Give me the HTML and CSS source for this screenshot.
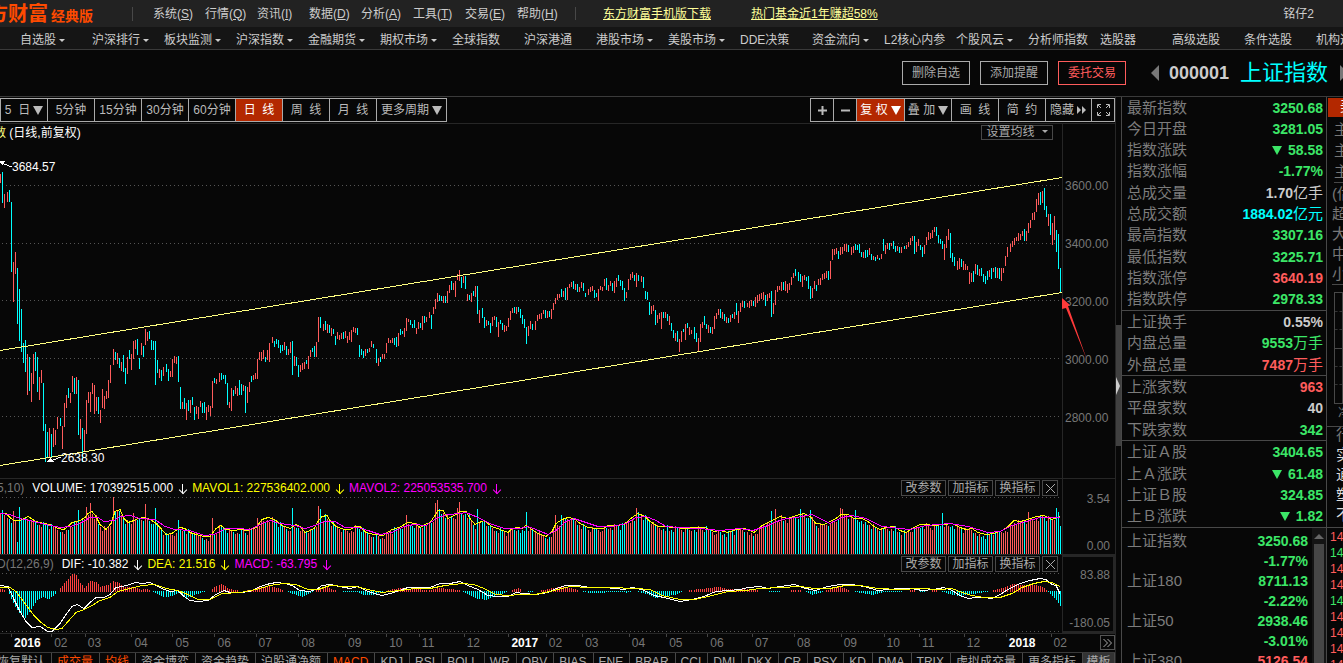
FILE: index.html
```html
<!DOCTYPE html>
<html lang="zh-CN">
<head>
<meta charset="utf-8">
<title>上证指数 000001</title>
<link rel="stylesheet" href="styles.css">
</head>
<body>
<header class="titlebar">
  <div class="logo"><span class="logo-main">方财富</span><span class="logo-sub">经典版</span></div>
  <nav class="menu">
    <button>系统(<u>S</u>)</button><button>行情(<u>Q</u>)</button><button>资讯(<u>I</u>)</button><button>数据(<u>D</u>)</button><button>分析(<u>A</u>)</button><button>工具(<u>T</u>)</button><button>交易(<u>E</u>)</button><button>帮助(<u>H</u>)</button>
  </nav>
  <a class="promo" href="#">东方财富手机版下载</a>
  <a class="promo" href="#">热门基金近1年赚超58%</a>
  <span class="user">铭仔2</span>
</header>
<nav class="channels">
  <button class="more">自选股</button><button class="more">沪深排行</button><button class="more">板块监测</button><button class="more">沪深指数</button><button class="more">金融期货</button><button class="more">期权市场</button><button>全球指数</button><button>沪深港通</button><button class="more">港股市场</button><button class="more">美股市场</button><button>DDE决策</button><button class="more">资金流向</button><button>L2核心内参</button><button class="more">个股风云</button><button>分析师指数</button><button>选股器</button><button>高级选股</button><button>条件选股</button><button>机构选股</button>
</nav>
<div class="security">
  <button class="act">删除自选</button>
  <button class="act">添加提醒</button>
  <button class="act trade">委托交易</button>
  <button class="step prev" aria-label="上一只"></button>
  <span class="code">000001</span>
  <h1 class="name">上证指数</h1>
  <button class="step next" aria-label="下一只"></button>
</div>
<main class="main">
  <section class="charts">
    <div class="toolbar">
      <div class="group periods">
        <button>5&nbsp; 日<i class="tri"></i></button><button>5分钟</button><button>15分钟</button><button>30分钟</button><button>60分钟</button><button class="on">日&nbsp; 线</button><button>周&nbsp; 线</button><button>月&nbsp; 线</button><button class="wide">更多周期<i class="tri"></i></button>
      </div>
      <div class="group tools">
        <button class="small" aria-label="放大"><svg width="9" height="9"><path d="M0 4.5H9M4.5 0V9" stroke="#bbb" stroke-width="2"/></svg></button><button class="small" aria-label="缩小"><svg width="9" height="9"><path d="M0 4.5H9" stroke="#bbb" stroke-width="2"/></svg></button><button class="on first">复 权<i class="tri"></i></button><button>叠 加<i class="tri"></i></button><button>画&nbsp; 线</button><button>简&nbsp; 约</button><button class="hide">隐藏<svg width="10" height="8"><path d="M0 0L4 4L0 8ZM5 0L9 4L5 8Z" fill="#bbb"/></svg></button><button class="small" aria-label="全屏"><svg width="13" height="12" fill="none" stroke="#bbb"><path d="M.5 4V.5H4M1 1L4 4M9 .5H12.5V4M12 1L9 4M.5 8V11.5H4M1 11L4 8M9 11.5H12.5V8M12 11L9 8"/></svg></button>
      </div>
    </div>
    <div class="pane price">
      <div class="plot">
        <div class="head"><span class="series"><b class="nm">数</b> (日线,前复权)</span><button class="ma">设置均线<i class="tri tiny"></i></button></div>
        <svg id="k" class="canvas k" viewBox="0 150 1062 328" preserveAspectRatio="none"></svg>
      </div>
      <div class="axis prices"><span>3600.00</span><span>3400.00</span><span>3200.00</span><span>3000.00</span><span>2800.00</span></div>
      <svg class="arrow" width="28" height="66" viewBox="0 0 28 66" fill="#ff3a3a"><path d="M0 1L8 8L6 9L25 63L4 11L0 12Z"/></svg>
    </div>
    <div class="pane">
      <div class="plot">
        <div class="head sub"><span class="dim">5,10)</span><span class="w">VOLUME: 170392515.000</span><span class="w dn"></span><span class="y">MAVOL1: 227536402.000</span><span class="y dn"></span><span class="m">MAVOL2: 225053535.700</span><span class="m dn"></span>
          <div class="ops"><button>改参数</button><button>加指标</button><button>换指标</button><button class="x" aria-label="关闭"><svg width="9" height="9"><path d="M0 0L9 9M9 0L0 9" stroke="#aaa"/></svg></button></div></div>
        <svg id="v" class="canvas v" viewBox="0 22 1062 57" preserveAspectRatio="none"></svg>
      </div>
      <div class="axis ends"><span>3.54</span><span>0.00</span></div>
    </div>
    <div class="pane macd">
      <div class="plot">
        <div class="head sub"><span class="dim">D(12,26,9)</span><span class="w">DIF: -10.382</span><span class="w dn"></span><span class="y">DEA: 21.516</span><span class="y dn"></span><span class="m">MACD: -63.795</span><span class="m dn"></span>
          <div class="ops"><button>改参数</button><button>加指标</button><button>换指标</button><button class="x" aria-label="关闭"><svg width="9" height="9"><path d="M0 0L9 9M9 0L0 9" stroke="#aaa"/></svg></button></div></div>
        <svg id="m" class="canvas d" viewBox="0 98 1062 60" preserveAspectRatio="none"></svg>
      </div>
      <div class="axis ends boxed"><span>83.88</span><span>-180.05</span></div>
    </div>
    <div class="timeline"><div id="months" class="months"></div><button class="fwd" aria-label="更多"><svg width="9" height="8" fill="none" stroke="#aaa"><path d="M.5 0L4.5 4L.5 8M4.5 0L8.5 4L4.5 8"/></svg></button></div>
    <div class="tabs"><button class="cut">恢复默认</button><button class="hot">成交量</button><button class="hot">均线</button><button>资金博弈</button><button>资金趋势</button><button>沪股通净额</button><button class="hot">MACD</button><button>KDJ</button><button>RSI</button><button>BOLL</button><button>WR</button><button>OBV</button><button>BIAS</button><button>ENE</button><button>BRAR</button><button>CCI</button><button>DMI</button><button>DKX</button><button>CR</button><button>PSY</button><button>KD</button><button>DMA</button><button>TRIX</button><button>虚拟成交量</button><button>更多指标</button><button class="tpl">模板</button></div>
  </section>
  <div class="splitter"><button class="grip" aria-label="展开"></button></div>
  <aside class="quote">
    <table class="facts">
      <tbody>
        <tr><th>最新指数</th><td class="g">3250.68</td></tr>
        <tr><th>今日开盘</th><td class="g">3281.05</td></tr>
        <tr><th>指数涨跌</th><td class="g"><i class="tri"></i>58.58</td></tr>
        <tr><th>指数涨幅</th><td class="g">-1.77%</td></tr>
        <tr><th>总成交量</th><td>1.70<em>亿手</em></td></tr>
        <tr><th>总成交额</th><td class="c">1884.02<em>亿元</em></td></tr>
        <tr><th>最高指数</th><td class="g">3307.16</td></tr>
        <tr><th>最低指数</th><td class="g">3225.71</td></tr>
        <tr><th>指数涨停</th><td class="r">3640.19</td></tr>
        <tr><th>指数跌停</th><td class="g">2978.33</td></tr>
      </tbody>
      <tbody>
        <tr><th>上证换手</th><td>0.55%</td></tr>
        <tr><th>内盘总量</th><td class="g">9553<em>万手</em></td></tr>
        <tr><th>外盘总量</th><td class="r">7487<em>万手</em></td></tr>
      </tbody>
      <tbody>
        <tr><th>上涨家数</th><td class="r">963</td></tr>
        <tr><th>平盘家数</th><td>40</td></tr>
        <tr><th>下跌家数</th><td class="g">342</td></tr>
      </tbody>
      <tbody>
        <tr><th>上证Ａ股</th><td class="g">3404.65</td></tr>
        <tr><th>上Ａ涨跌</th><td class="g"><i class="tri"></i>61.48</td></tr>
        <tr><th>上证Ｂ股</th><td class="g">324.85</td></tr>
        <tr><th>上Ｂ涨跌</th><td class="g"><i class="tri"></i>1.82</td></tr>
      </tbody>
    </table>
    <div class="indices">
      <table>
        <tr><th>上证指数</th><td class="g">3250.68</td></tr><tr><th></th><td class="g">-1.77%</td></tr>
        <tr><th>上证180</th><td class="g">8711.13</td></tr><tr><th></th><td class="g">-2.22%</td></tr>
        <tr><th>上证50</th><td class="g">2938.46</td></tr><tr><th></th><td class="g">-3.01%</td></tr>
        <tr><th>上证380</th><td class="r">5126.54</td></tr>
      </table>
      <div class="scroll"><i class="up"></i><i class="thumb"></i></div>
    </div>
  </aside>
  <aside class="strip">
    <div class="st-tab">美</div>
    <div class="st-list"><span>主</span><span>主</span><span>主</span></div>
    <div class="st-list five"><span>(估</span><span>超</span><span>大</span><span>中</span><span>小</span></div>
    <div class="st-mid"><div class="st-box"><i></i><i></i><i class="solid"></i><i></i><i></i></div><span class="st-net">净</span></div>
    <div class="st-news"><span>行</span><b>实</b><b>通</b><b>塑</b><b>不</b></div>
    <div class="st-ticks"><span class="r">14</span><span class="g">14</span><span class="r">14</span><span class="r">14</span><span class="g">14</span><span class="r">14</span><span class="r">14</span><span class="r">14</span><span class="r">14</span></div>
  </aside>
</main>
<script src="charts.js"></script>
</body>
</html>
```
FILE: styles.css
```css
* { box-sizing: border-box; }
body {
  margin: 0;
  height: 100vh;
  overflow: hidden;
  display: flex;
  flex-direction: column;
  background: #070707;
  color: #ccc;
  font: 12px/16px "Liberation Sans", "Noto Sans CJK SC", sans-serif;
  white-space: nowrap;
}
button {
  margin: 0;
  padding: 0;
  border: 0;
  background: none;
  color: inherit;
  font: inherit;
  white-space: nowrap;
}
i, em { font-style: normal; }
.g { color: #3ce667; }
.r { color: #ff5c5c; }
.c { color: #00ffff; }
.tri {
  display: inline-block;
  border: 5px solid transparent;
  border-top: 9px solid currentColor;
  border-bottom: 0;
}
.tri.tiny { border-width: 3px 3px 0; }

/* title bar */
.titlebar {
  flex: none;
  display: flex;
  align-items: center;
  height: 27px;
  padding-right: 29px;
  background: #222;
}
.logo {
  flex: none;
  display: flex;
  align-items: center;
  width: 145px;
  height: 14px;
  margin-left: -12px;
  border-right: 1px solid #484848;
  color: #ff4a00;
  font-weight: bold;
}
.logo-main { font-size: 20px; margin-right: 3px; }
.logo-sub { font-size: 14px; margin-top: 4px; }
.menu {
  display: flex;
  align-items: center;
  height: 13px;
  margin-left: 20px;
  padding-right: 6px;
  border-right: 1px solid #484848;
}
.menu button { width: 52px; text-align: left; }
.promo { color: #ffff99; margin-left: 27px; }
.promo + .promo { margin-left: 40px; }
.user { margin-left: auto; }

.channels {
  flex: none;
  display: flex;
  height: 23px;
  padding-left: 20px;
  background: #151515;
  border-bottom: 1px solid #3a3a3a;
}
.channels button { flex: none; width: 72px; padding-top: 4px; text-align: left; }
.more::after {
  content: "";
  display: inline-block;
  margin-left: 3px;
  vertical-align: 2px;
  border: 3px solid transparent;
  border-top-color: currentColor;
  border-bottom: 0;
}

/* selected security */
.security {
  flex: none;
  display: flex;
  justify-content: flex-end;
  align-items: center;
  height: 47px;
  margin-right: -5px;
  border-bottom: 1px solid #3a3a3a;
}
.act {
  width: 68px;
  height: 24px;
  margin-right: 10px;
  border: 1px solid #aaa;
  color: #aaa;
}
.trade { border-color: #ff5c5c; color: #ff5c5c; }
.step { border: 8px solid transparent; }
.prev { border-right-color: #777; border-left: 0; margin: 0 10px 0 15px; }
.next { border-left-color: #777; border-right: 0; }
.code { font-size: 18px; font-weight: bold; margin-right: 11px; }
.name { margin: 0 12px 0 0; font-size: 22px; line-height: 28px; font-weight: normal; color: #00ffff; }

.main { flex: 1; display: flex; min-height: 0; }
.charts {
  flex: 1;
  min-width: 0;
  border-right: 1px solid #262626;
}
.toolbar {
  display: flex;
  justify-content: space-between;
  height: 27px;
  padding-top: 1px;
  border-bottom: 1px solid #262626;
}
.group {
  display: flex;
  height: 24px;
  border: 1px solid #aaa;
  border-right: 0;
  color: #bbb;
}
.group button {
  display: flex;
  align-items: center;
  justify-content: center;
  gap: 3px;
  width: 47px;
  border-right: 1px solid #aaa;
}
.group .small { width: 23px; }
.group .wide { width: 70px; }
.group .first { width: 48px; }
.group .hide { width: 46px; }
.group .on { background: #b32800; color: #fff; }

/* chart panes */
.pane {
  position: relative;
  display: flex;
  border-bottom: 1px solid #262626;
}
.plot { flex: 1; min-width: 0; overflow: hidden; }
.head {
  display: flex;
  justify-content: space-between;
  height: 26px;
  padding: 1px 9px 0 0;
  color: #fff;
}
.series { margin-left: -6px; }
.nm { font-weight: normal; color: #ffff80; }
.ma {
  height: 15px;
  width: 72px;
  line-height: 13px;
  border: 1px solid #484848;
  color: #aaa;
}
.ma .tri { margin-left: 7px; vertical-align: 3px; }
.canvas { display: block; width: 100%; shape-rendering: crispEdges; }
.k { height: 328px; }
.v { height: 57px; }
.d { height: 60px; }
.head.sub {
  justify-content: flex-start;
  height: 18px;
  gap: 6px;
  padding: 1px 4px 0 0;
}
.dim { margin: 0 2px 0 -3px; color: #777; }
.w { color: #fff; }
.y { color: #ffff00; }
.m { color: #ff00ff; }
.dn {
  width: 7px;
  height: 9px;
  margin-top: 4px;
  background: linear-gradient(currentColor, currentColor) 3px 0 / 1px 9px no-repeat;
}
.dn::after {
  content: "";
  display: block;
  width: 5px;
  height: 5px;
  margin: 3px 0 0 1px;
  border: solid currentColor;
  border-width: 0 1px 1px 0;
  transform: rotate(45deg);
}
.ops { display: flex; gap: 2px; margin-left: auto; color: #aaa; }
.ops button {
  width: 45px;
  height: 16px;
  line-height: 14px;
  border: 1px solid #484848;
}
.ops .x { width: 16px; display: grid; place-content: center; }
.axis {
  flex: none;
  width: 53px;
  border-left: 1px solid #262626;
  color: #777;
}
.prices {
  display: grid;
  grid-auto-rows: 58px;
  align-content: start;
  align-items: center;
  padding: 33px 0 0 2px;
}
.ends {
  display: flex;
  flex-direction: column;
  justify-content: space-between;
  padding: 12px 5px 0 0;
  text-align: right;
}
.ends.boxed { padding: 10px 3px 0 0; border: 2px solid #262626; border-left-width: 1px; }
.arrow { position: absolute; right: 25px; top: 173px; }

.timeline { display: flex; height: 18px; }
.months { flex: 1; display: flex; padding-left: 11px; }
.months span { flex-basis: 0; width: 0; padding: 1px 0 0 3px; background: linear-gradient(#444, #444) 0 0 / 1px 3px no-repeat; color: #777; }
.months .yr { color: #fff; font-weight: bold; }
.fwd {
  width: 15px;
  height: 15px;
  margin-top: 1px;
  border: 1px solid #555;
  display: grid;
  place-content: center;
}
.tabs { display: flex; border-top: 1px solid #3a3a3a; color: #aaa; }
.tabs button { flex: none; height: 18px; padding: 0 6px 0 5px; border-right: 1px solid #484848; line-height: 14px; }
.tabs .hot { color: #ff4a00; }
.tabs .cut { margin-left: -8px; }
.tabs .tpl { flex: 1; min-width: 0; padding: 0; background: #333; }

.splitter { flex: none; width: 5px; padding-top: 228px; }
.grip { display: block; width: 5px; height: 121px; background: #404040; }
.grip::after { content: ""; display: block; width: 0; border: 9px solid transparent; border-left: 4px solid #ccc; border-right: 0; }

/* quote panel */
.quote {
  flex: none;
  width: 206px;
  border: solid #484848;
  border-width: 0 1px;
}
table { width: 100%; border-collapse: collapse; }
th, td { padding: 0; }
th { text-align: left; font-weight: normal; font-size: 15px; color: #7c7c7c; }
td { text-align: right; font-weight: bold; font-size: 14px; }
td em { font-size: 15px; font-weight: normal; }
td .tri { margin-right: 6px; }
.facts { height: 431px; border-bottom: 1px solid #484848; }
.facts tbody + tbody tr:first-child { border-top: 1px solid #484848; }
.facts th { padding-left: 5px; }
.facts td { padding-right: 3px; }
.indices { display: flex; }
.indices table { flex: 1; margin-top: 3px; }
.indices { align-items: flex-start; }
.indices th { padding-left: 5px; }
.indices td { padding-right: 4px; }
.indices tr { height: 20px; }
.scroll {
  flex: none;
  width: 14px;
  padding: 6px 2px 0;
  background: #141414;
}
.scroll i { display: block; }
.up { border: 5px solid transparent; border-bottom-color: #666; border-top: 0; }
.thumb { height: 140px; margin-top: 5px; background: #464646; }

/* right-hand strip */
.strip { flex: none; width: 16px; overflow: hidden; color: #777; font-size: 15px; }
.st-tab { height: 19px; margin: 1px 0 0 1px; padding-left: 12px; background: #b32800; color: #fff; }
.st-list { display: grid; grid-auto-rows: 21px; align-items: center; margin-left: 7px; padding-top: 2px; border-bottom: 1px solid #484848; }
.st-list.five { grid-auto-rows: 20px; padding-top: 1px; margin-left: 5px; }
.st-mid { height: 142px; padding: 7px 0 0 7px; border-bottom: 1px solid #484848; }
.st-box { display: flex; flex-direction: column; justify-content: space-between; height: 112px; padding: 18px 0; border: 1px solid #484848; }
.st-box i { border-top: 1px dashed #333; }
.st-box .solid { border-top: 1px solid #484848; }
.st-net { margin-left: 4px; font-size: 12px; }
.st-news { display: grid; grid-auto-rows: 20px; padding-left: 9px; border-bottom: 1px solid #484848; }
.st-news b { font-weight: normal; color: #ddd; }
.st-ticks { display: grid; grid-auto-rows: 16px; padding: 1px 0 0 3px; font-size: 12px; }
```
FILE: charts.js
```js
// Daily bars: "startX|" then colour (r up, c down) with high,low offsets; bars step by 2
const days = `0|r24,33 c22,53 r44,58
7|r42,52 c40,52 c52,122 r112,152 r102,124 c118,174 c139,191 c159,202 c193,213 c190,222 r204,245 c207,241 r223,252 r204,234 c202,221 c207,242 r227,250 r220,233 c233,281 c274,312 c282,308 r278,308 c284,307 r278,297 r280,295 r267,279
60|c268,276 r276,299 r253,277 r245,258 c238,248 r243,253 r226,242 c228,244 r227,244 c230,285 r269,289 c278,312 r280,302 r250,284 r242,253 r242,262 r233,244 r235,264 r247,261 c247,264 r260,273 r239,258 r246,259 r241,249 r230,248 r215,233
113|r199,215 c202,210 r203,214 c208,218 r212,221 c205,222 c218,234 r207,224 c200,209 r204,220 r191,209 r190,199 c189,205 c208,219 r193,205 c196,207 r179,195 r182,191 c181,189 c190,200 c191,200 c191,235 c210,223 r219,228 c220,231 r217,226
166|c214,222 c219,231 r221,227 r209,227 r206,213 r207,214 c206,232 c237,259 r252,259 c248,259 r253,270 c250,261 r250,263 c247,255 c257,270 r256,264 r257,269 r251,257 c253,263 c252,263 r257,270 r255,262 r256,266 r231,258 c228,233 r229,234
219|r223,232 c223,230 c225,229 c225,234 c233,255 r252,258 r238,261 c240,246 r236,244 r238,246 c230,245 c234,245 r235,241 c236,263 r237,253 r232,242 c226,232 r225,230 r223,229 r209,229 r202,210 r202,211 r200,209 c207,212 r200,210 r193,212
272|r187,193 c191,197 c189,194 c190,198 c195,203 c195,201 r192,200 c196,205 r199,205 r192,203 c191,225 r206,216 c207,216 c215,227 r215,222 r213,220 r212,219 c210,214 r206,219 r200,207 c198,202 c196,207 r192,207 r167,192 c167,178
323|r174,181 c171,180 r174,183 c175,183 r178,186 c179,184 c186,195 r182,189 r185,190 r183,189 c182,189 r181,188 r186,193 r182,190 r180,192 r177,182 r178,183 c178,185 c195,207 c199,205 c201,208 r199,206 c199,203 r198,202 r191,197 c194,198
376|c199,213 r208,216 c207,212 r204,209 r204,209 r193,203 r188,193 r190,193 r188,193 c188,195 c187,197 r183,196 c179,185 c181,184 r178,187 r168,181 r169,172 c170,175 c174,178 c170,178 r178,184 r172,179 c173,178 r166,180 c166,173 r167,172
429|r162,168 c165,179 r157,164 r149,159 r143,152 c145,151 c146,151 r146,153 c146,153 r141,153 r135,143 c131,140 r133,140 r131,147 r124,130 r120,131 c127,138 r126,133 c126,139 r144,151 c145,150 r143,152 c141,146 r136,147 c136,164 r160,173
482|c158,168 c167,178 r170,176 c171,175 c173,183 r167,176 r166,170 c167,177 r172,187 c170,174 c173,180 r175,182 r176,181 r168,177 r161,170 r158,163 c157,163 r157,164 c157,162 c159,168 c165,174 c169,178 c177,194 r176,186 r171,179 c174,180
535|r171,180 r165,171 r164,169 r163,169 r160,164 c160,168 r161,168 c161,167 r159,169 r153,160 r148,154 r144,150 r144,148 c139,147 r141,147 c138,150 r137,150 r134,138 r132,137 c131,139 r134,140 c134,142 r137,142 r132,138 c133,141 c143,147
588|r139,145 r137,142 r136,141 c140,148 c143,147 r139,151 r136,140 r137,141 r129,136 c128,140 r135,141 r131,136 c133,141 r131,143 r128,137 c125,131 c130,136 c131,140 c138,151 r142,148 r129,140 r124,130 r122,128 c125,131 r123,137 c125,131
641|r126,132 c127,138 c141,149 c142,150 c152,165 r156,164 r155,161 c160,175 r165,173 r163,169 r162,179 c162,168 r162,168 c164,171 r166,175 c173,181 c180,188 r183,191 c181,192 r189,202 r181,192 c179,182 r174,190 c173,178 r177,185 r180,184
694|c177,189 c183,192 r188,201 r174,192 r172,178 c166,175 c174,179 r175,183 c177,183 r177,184 r166,179 r163,169 r159,165 c159,168 r162,169 c164,171 r167,173 c168,173 r165,172 c164,168 r162,169 c153,165 r161,173 r153,162 r151,157 c151,158
747|r153,157 r151,158 r150,156 c151,156 r147,157 r145,153 r144,151 r143,149 r142,150 c145,156 r144,151 r143,148 c141,167 r153,164 r140,155 r136,142 r136,140 r132,141 c132,140 r131,141 r134,143 r133,140 r127,135 r123,128 c119,126
798|c122,131 c124,132 r126,137 r125,130 c127,131 c126,139 c136,149 r138,148 r131,139 c135,141 r129,135 r128,135 r124,130 r123,129 r121,128 c121,130 r111,129 r99,110 r99,105 r98,104 c101,109 r97,105 r97,104 r94,101 r94,102 c95,102
851|r97,105 r96,103 c94,100 c95,100 c94,103 c102,107 r102,108 c100,108 c100,107 r98,105 c104,110 r106,110 c107,111 r105,109 c108,110 r104,109 c89,101 r95,104 r93,99 c93,100 r93,96 c91,99 c96,102 r96,101 c97,103 r97,103
904|c96,99 r95,99 r92,97 r88,95 r86,91 c86,104 r92,102 r89,96 c95,100 c97,107 r95,104 r87,95 r82,90 r83,89 r80,88 r77,82 c77,86 c85,93 c89,94 c91,99 r94,110 r86,98 r79,90 c83,108 c103,112 c107,116
957|r111,120 r108,119 c109,117 r111,120 r114,120 r116,120 r122,134 r123,132 c121,132 r114,124 c115,125 r119,126 c118,126 c124,132 c126,134 c121,130 r120,127 c118,129 r118,122 c117,128 r118,128 c118,129 r118,131 r118,123 r106,116 r97,107
1010|r94,102 r91,97 r88,95 r87,91 r83,91 r84,90 r81,86 c79,91 r81,91 r73,83 r70,78 r63,70 r62,70 r49,62 r43,55 c42,55 r41,53 c38,60 c56,67 r64,76 c64,85 r73,95 r66,90 c80,102 c84,119 c118,142`;

const bars = [];
for (const row of days.split('\n')) {
  const [start, list] = row.split('|');
  list.split(' ').forEach((t, i) => {
    const [hi, lo] = t.slice(1).split(',').map(Number);
    bars.push({ x: +start + i * 2, hi: hi + 150, lo: lo + 150, col: t[0] });
  });
}
const points = s => s.split(';').map(p => p.split(',').map(Number));
const at = (pts, x) => {
  let i = 1;
  while (i < pts.length - 1 && pts[i][0] < x) i++;
  const [a, b] = pts[i - 1], [c, d] = pts[i];
  return b + (d - b) * (x - a) / (c - a);
};
const RED = '#ff5c5c', CYAN = '#00ffff';
const stroke = (d, col, extra = '') => `<path d="${d}" fill="none" stroke="${col}" ${extra}/>`;
const line = (pts, col) => stroke('M' + pts.map(p => `${p[0]} ${p[1] + .5}`).join('L'), col);
const dots = y => stroke(`M2 ${y}.5H1060`, '#555', 'stroke-dasharray="1 3"');
const sticks = (list, red = RED) => ['r', 'c'].map(c =>
  stroke(list.filter(b => b.col === c).map(b => `M${b.x + .5} ${b.hi}V${b.lo}`).join(''), c === 'r' ? red : CYAN)).join('');

document.getElementById('k').innerHTML =
  [185, 243, 300, 358, 416].map(dots).join('') + sticks(bars) +
  line([[0, 350], [1062, 177]], '#ffff80') + line([[0, 465], [1062, 292]], '#ffff80') +
  stroke('M0 162.5L12 167M48 462L61 457', '#fff') +
  '<path d="M-3 161H5L3 165ZM46 462L51 458L54 462Z" fill="#fff"/>' +
  '<g fill="#fff" font-size="12"><text x="12" y="171">3684.57</text><text x="61" y="462">2638.30</text></g>';

const ma5 = points('0,38;6,38;10,42;14,45;20,45;28,41;36,46;44,48;50,49;58,53;64,54;68,51;72,47;80,45;85,42;88,38;92,36;96,41;100,49;106,54;111,48;115,36;120,34;124,43;128,47;134,45;138,43;144,42;148,43;155,47;161,53;166,59;172,58;180,52;185,53;190,57;196,59;204,61;210,61;216,53;221,50;226,54;234,55;240,54;247,55;256,52;262,44;268,42;272,43;276,45;282,50;290,53;296,49;300,51;305,57;310,55;314,53;318,46;322,41;327,40;330,45;336,51;344,54;350,54;355,51;360,51;366,57;374,59;383,60;392,54;399,52;408,47;415,48;420,52;425,49;430,47;435,40;438,35;443,35;448,43;456,39;460,36;466,36;470,43;475,49;484,45;492,51;500,54;508,57;512,53;518,52;522,53;526,50;532,54;538,58;546,61;552,56;556,48;562,44;568,42;574,43;580,48;588,52;596,53;603,53;608,50;616,50;624,49;632,42;638,38;645,41;650,46;658,51;664,51;674,52;685,53;695,52;705,52;714,56;720,55;728,57;736,54;745,53;754,57;762,50;770,46;780,41;788,43;796,40;804,38;810,41;816,48;824,49;830,46;836,43;841,39;848,39;854,43;862,43;868,46;874,51;880,54;886,52;894,51;900,55;906,57;914,52;920,49;926,49;934,50;944,49;952,48;960,52;966,54;972,53;978,57;986,59;994,58;1002,55;1008,51;1014,45;1020,46;1028,44;1036,41;1044,40;1052,44;1060,41');
const ma10 = points('0,38;10,39;20,43;34,46;46,49;60,52;70,51;80,48;90,42;98,42;104,46;114,45;120,41;130,40;140,43;155,44;165,51;175,54;190,55;204,60;214,59;226,53;238,53;250,54;262,48;270,45;280,48;295,50;305,53;315,50;325,46;335,46;345,52;358,52;368,55;380,59;392,57;404,51;414,49;426,50;438,42;448,39;460,38;466,37;478,42;492,49;505,53;520,53;528,51;536,54;548,59;556,55;566,46;574,43;586,47;598,51;612,51;626,48;636,42;646,41;656,45;666,51;680,52;700,53;720,55;740,53;753,55;768,50;782,44;796,42;812,39;820,43;830,48;842,42;852,40;866,43;882,51;900,53;910,54;926,50;950,48;968,51;988,57;1000,56;1012,50;1026,46;1040,42;1060,42');
const peaks = { 2: 35, 13: 36, 17: 67, 19: 32, 78: 35, 86: 32, 90: 28, 111: 28, 113: 22, 133: 38, 145: 29, 155: 33, 178: 45, 212: 43, 257: 43, 270: 38, 292: 33, 318: 31, 320: 34, 406: 40, 435: 28, 437: 25, 457: 33, 459: 27, 477: 34, 526: 37, 555: 40, 561: 40, 636: 33, 637: 37, 771: 36, 775: 34, 800: 34, 810: 35, 840: 33, 842: 34, 855: 35, 942: 38, 1028: 37, 1056: 33, 1058: 37, 1060: 51 };
const volume = bars.map((b, i) => {
  let top = Math.round(at(ma5, b.x) + [1, 4, -1, 2, 5, 0, 3][(i * 5 + (i >> 3)) % 7]);
  for (const p in peaks) if (+p === b.x || (+p + 1 === b.x && !bars.some(q => q.x === +p))) top = peaks[p];
  return { x: b.x, hi: top, lo: 79, col: b.col };
});
document.getElementById('v').innerHTML = dots(22) + sticks(volume) + line(ma5, '#ffff00') + line(ma10, '#ff00ff');

const dif = points('0,110;8,111;14,124;20,136;26,146;32,152;40,151;48,156;52,156;60,148;66,139;72,131;77,129;84,133;90,127;96,122;104,122;110,119;116,112;122,111;130,109;135,107;142,108;150,107;156,110;162,113;170,116;178,115;184,121;190,125;198,126;208,125;216,119;224,115;230,117;240,117;250,116;258,112;266,109;276,107;286,108;292,110;300,115;310,116;318,113;322,110;330,109;340,111;350,113;358,111;366,115;374,118;382,120;394,117;402,114;408,112;420,112;430,112;440,108;450,108;460,106;468,110;478,114;488,120;498,121;508,121;516,117;524,118;536,119;548,117;556,113;566,110;578,110;590,112;604,112;616,113;624,114;632,112;642,114;654,120;664,122;680,126;692,124;704,121;716,116;728,115;740,114;748,112;760,111;768,113;780,111;795,109;802,112;815,115;828,111;840,109;852,109;864,111;878,115;888,114;900,113;912,113;922,115;934,114;944,112;952,115;960,120;968,123;976,122;984,122;992,123;1000,119;1008,114;1020,108;1030,105;1040,103;1046,104;1052,109;1056,110;1060,118');
const dea = points('0,112;10,112;16,116;22,124;28,132;34,140;40,146;48,152;56,154;62,153;68,146;76,137;84,134;92,130;100,125;110,122;118,116;130,113;142,110;155,109;166,113;178,115;190,120;198,124;210,124;222,118;240,117;256,114;270,110;284,108;296,109;308,114;318,114;330,110;345,111;356,111;368,114;382,117;400,115;415,113;430,113;445,110;462,108;474,109;484,113;496,119;508,120;520,119;535,119;550,116;570,111;590,112;610,112;635,113;650,114;662,120;680,124;695,124;712,120;728,116;745,115;760,113;780,112;800,111;815,113;830,113;845,110;860,110;878,113;900,114;920,113;940,114;952,113;962,117;972,120;984,122;1000,122;1012,118;1022,112;1034,108;1044,106;1052,107;1060,111');
const hist = points('0,2;8,0;11,-8;16,-18;24,-28;30,-20;36,-10;42,-6;48,-9;54,-4;60,3;66,10;72,17;76,16;80,8;84,3;90,10;96,9;100,4;108,6;113,10;119,8;124,4;130,4;135,4;140,1;146,2;152,0;156,-3;164,-7;172,-5;178,-2;186,-7;192,-5;202,-1;210,0;214,4;222,7;228,2;240,0;252,1;260,4;270,5;280,2;290,-2;302,-6;312,-1;320,3;326,4;332,1;345,-1;356,-1;364,-4;372,-4;380,-2;388,1;400,3;412,2;430,1;437,3;450,2;462,0;468,-4;478,-8;486,-9;494,-5;504,-2;512,1;518,3;522,0;530,-1;538,0;548,2;560,4;570,3;580,0;590,-2;600,-2;612,-1;622,-1;626,-2;634,0;646,-3;656,-7;664,-5;675,-4;684,0;700,2;718,4;728,2;745,2;762,0;775,-1;795,1;805,0;812,-4;822,-1;830,2;838,5;848,1;860,-2;872,-4;884,-1;900,-1;912,1;922,-1;934,1;946,-2;956,-5;968,-4;980,-2;990,0;1002,3;1012,7;1024,6;1036,6;1044,3;1050,-3;1056,-9;1060,-15');
const histBars = bars.map(b => {
  const h = Math.round(at(hist, b.x));
  return h > 0 ? { x: b.x, hi: 116 - h, lo: 117, col: 'r' } : { x: b.x, hi: 116, lo: 116 - h, col: 'c' };
});
document.getElementById('m').innerHTML = dots(98) + dots(156) + sticks(histBars, '#ff4040') + line(dif, '#fff') + line(dea, '#ffff00');

const ticks = '11,2016 51,02 84,03 131,04 172,05 214,06 255,07 298,08 345,09 386,10 418,11 463,12 508,2017 545,02 581,03 628,04 665,05 706,06 751,07 793,08 840,09 883,10 918,11 963,12 1005,2018 1050,02 1100,';
const cells = ticks.split(' ').map(t => t.split(','));
document.getElementById('months').innerHTML = cells.slice(0, -1).map(([x, label], i) =>
  `<span${label.length > 2 ? ' class="yr"' : ''} style="flex-grow:${cells[i + 1][0] - x}">${label}</span>`).join('');
```
